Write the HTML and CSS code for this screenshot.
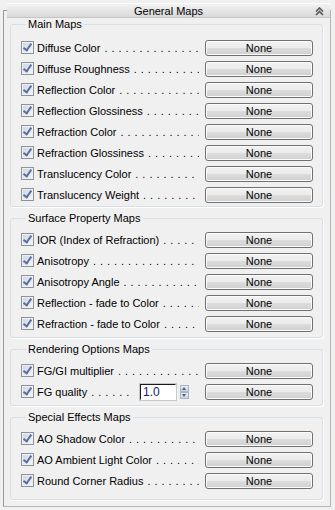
FILE: index.html
```html
<!DOCTYPE html>
<html lang="en">
<head>
    <meta charset="UTF-8">
    <meta name="viewport" content="width=device-width, initial-scale=1.0">
    <title>General Maps</title>
    <link rel="stylesheet" href="styles.css">
</head>
<body>
    <div class="rollout">
        <div class="rollout-head">
            <span>General Maps</span>
            <svg class="collapse" width="9" height="9" viewBox="0 0 9 9">
                <path d="M1 4.5 L4.5 1 L8 4.5 M1 8 L4.5 4.5 L8 8" fill="none" stroke="#555" stroke-width="1.6"/>
            </svg>
        </div>

        <fieldset class="group">
            <legend>Main Maps</legend>
            <div class="row"><label class="check"><span class="box"></span><span class="name">Diffuse Color</span><span class="dots"></span></label><button class="map">None</button></div>
            <div class="row"><label class="check"><span class="box"></span><span class="name">Diffuse Roughness</span><span class="dots"></span></label><button class="map">None</button></div>
            <div class="row"><label class="check"><span class="box"></span><span class="name">Reflection Color</span><span class="dots"></span></label><button class="map">None</button></div>
            <div class="row"><label class="check"><span class="box"></span><span class="name">Reflection Glossiness</span><span class="dots"></span></label><button class="map">None</button></div>
            <div class="row"><label class="check"><span class="box"></span><span class="name">Refraction Color</span><span class="dots"></span></label><button class="map">None</button></div>
            <div class="row"><label class="check"><span class="box"></span><span class="name">Refraction Glossiness</span><span class="dots"></span></label><button class="map">None</button></div>
            <div class="row"><label class="check"><span class="box"></span><span class="name">Translucency Color</span><span class="dots"></span></label><button class="map">None</button></div>
            <div class="row"><label class="check"><span class="box"></span><span class="name">Translucency Weight</span><span class="dots"></span></label><button class="map">None</button></div>
        </fieldset>

        <fieldset class="group">
            <legend>Surface Property Maps</legend>
            <div class="row"><label class="check"><span class="box"></span><span class="name">IOR (Index of Refraction)</span><span class="dots"></span></label><button class="map">None</button></div>
            <div class="row"><label class="check"><span class="box"></span><span class="name">Anisotropy</span><span class="dots"></span></label><button class="map">None</button></div>
            <div class="row"><label class="check"><span class="box"></span><span class="name">Anisotropy Angle</span><span class="dots"></span></label><button class="map">None</button></div>
            <div class="row"><label class="check"><span class="box"></span><span class="name">Reflection - fade to Color</span><span class="dots"></span></label><button class="map">None</button></div>
            <div class="row"><label class="check"><span class="box"></span><span class="name">Refraction - fade to Color</span><span class="dots"></span></label><button class="map">None</button></div>
        </fieldset>

        <fieldset class="group">
            <legend>Rendering Options Maps</legend>
            <div class="row"><label class="check"><span class="box"></span><span class="name">FG/GI multiplier</span><span class="dots"></span></label><button class="map">None</button></div>
            <div class="row">
                <label class="check"><span class="box"></span><span class="name">FG quality</span><span class="dots"></span></label>
                <div class="spinner">
                    <input class="spin-field" type="text" value="1.0">
                    <span class="spin-arrows"><span class="up"></span><span class="down"></span></span>
                </div>
                <button class="map">None</button>
            </div>
        </fieldset>

        <fieldset class="group group-last">
            <legend>Special Effects Maps</legend>
            <div class="row"><label class="check"><span class="box"></span><span class="name">AO Shadow Color</span><span class="dots"></span></label><button class="map">None</button></div>
            <div class="row"><label class="check"><span class="box"></span><span class="name">AO Ambient Light Color</span><span class="dots"></span></label><button class="map">None</button></div>
            <div class="row"><label class="check"><span class="box"></span><span class="name">Round Corner Radius</span><span class="dots"></span></label><button class="map">None</button></div>
        </fieldset>
    </div>
</body>
</html>
```

FILE: styles.css
```css
body {
    margin: 0;
    background-color: #f0f0f0;
    font-family: "Liberation Sans", Arial, sans-serif;
    font-size: 11px;
    color: #000;
}
.rollout {
    margin: 10px 4px 0 3px;
    height: 497px;
    box-sizing: border-box;
    border: 1px solid #9a9a9a;
    border-right-color: #b5b5b5;
    border-bottom-color: #b5b5b5;
}
.rollout-head {
    display: flex;
    align-items: center;
    justify-content: center;
    position: relative;
    height: 15px;
    margin: -8px 0 0 3px;
    box-sizing: border-box;
    background: linear-gradient(#f2f2f2, #d9d9d9);
    border-top: 1px solid #fff;
    border-bottom: 1px solid #c4c4c4;
}
.collapse {
    position: absolute;
    right: 6px;
    top: 3px;
}
.group {
    min-width: 0;
    margin: 0 7px 0 6px;
    padding: 6px 9px 1px 10px;
    border: 1px solid #d5dfe5;
    border-radius: 3px;
    box-shadow: 1px 1px 0 #fff;
}
.group + .group {
    margin-top: 5px;
    padding-top: 4px;
    padding-bottom: 3px;
}
.group.group-last {
    padding-bottom: 8px;
}
.group legend {
    padding: 0 2px;
    margin-left: 5px;
    line-height: 13px;
}
.row {
    display: flex;
    align-items: center;
    height: 21px;
}
.check {
    flex: 1;
    display: flex;
    align-items: center;
    min-width: 0;
    white-space: nowrap;
}
.box {
    position: relative;
    flex: none;
    width: 13px;
    height: 13px;
    box-sizing: border-box;
    border: 1px solid #8e9299;
    background: linear-gradient(135deg, #cfd4dc, #f7f7f7);
    box-shadow: inset 0 0 0 1px #eef0f3;
    margin-right: 3px;
}
.box::after {
    content: "";
    position: absolute;
    left: 3px;
    top: 0px;
    width: 3px;
    height: 7px;
    border-right: 2px solid #5870a8;
    border-bottom: 2px solid #5870a8;
    transform: rotate(35deg);
}
.name {
    flex: none;
}
.dots {
    flex: 1 1 0;
    width: 0;
    min-width: 0;
    overflow: hidden;
    padding-left: 4px;
    margin-right: 6px;
    letter-spacing: 0.45px;
}
.dots::after {
    content: ". . . . . . . . . . . . . . . . . . . . . . . . . . . . . . . . . . . .";
}
.map {
    flex: none;
    width: 108px;
    height: 16px;
    padding: 0;
    font: inherit;
    color: #000;
    border: 1px solid #707070;
    border-radius: 3px;
    background: linear-gradient(#f2f2f2 0%, #ebebeb 50%, #dddddd 51%, #cfcfcf 100%);
    box-shadow: inset 0 0 0 1px #fcfcfc;
}
.spinner {
    display: flex;
    align-items: center;
    margin-right: 16px;
}
.spin-field {
    width: 36px;
    height: 16px;
    box-sizing: border-box;
    padding: 0 2px;
    font: inherit;
    font-size: 12px;
    color: #10206a;
    background: #fff;
    border: 1px solid #fff;
    border-top-color: #1a1a1a;
    border-left-color: #1a1a1a;
    outline: 1px solid #c8c8c8;
}
.spin-arrows {
    display: flex;
    flex-direction: column;
    margin-left: 4px;
}
.spin-arrows span {
    width: 9px;
    height: 7px;
    box-sizing: border-box;
    background: linear-gradient(#e8eef5, #c9d4e1);
    border: 1px solid #a9b6c6;
    position: relative;
}
.spin-arrows .up::after,
.spin-arrows .down::after {
    content: "";
    position: absolute;
    left: 1px;
    border-left: 2.5px solid transparent;
    border-right: 2.5px solid transparent;
}
.spin-arrows .up::after {
    top: 1px;
    border-bottom: 3px solid #4a5f80;
}
.spin-arrows .down::after {
    top: 1px;
    border-top: 3px solid #4a5f80;
}
```
